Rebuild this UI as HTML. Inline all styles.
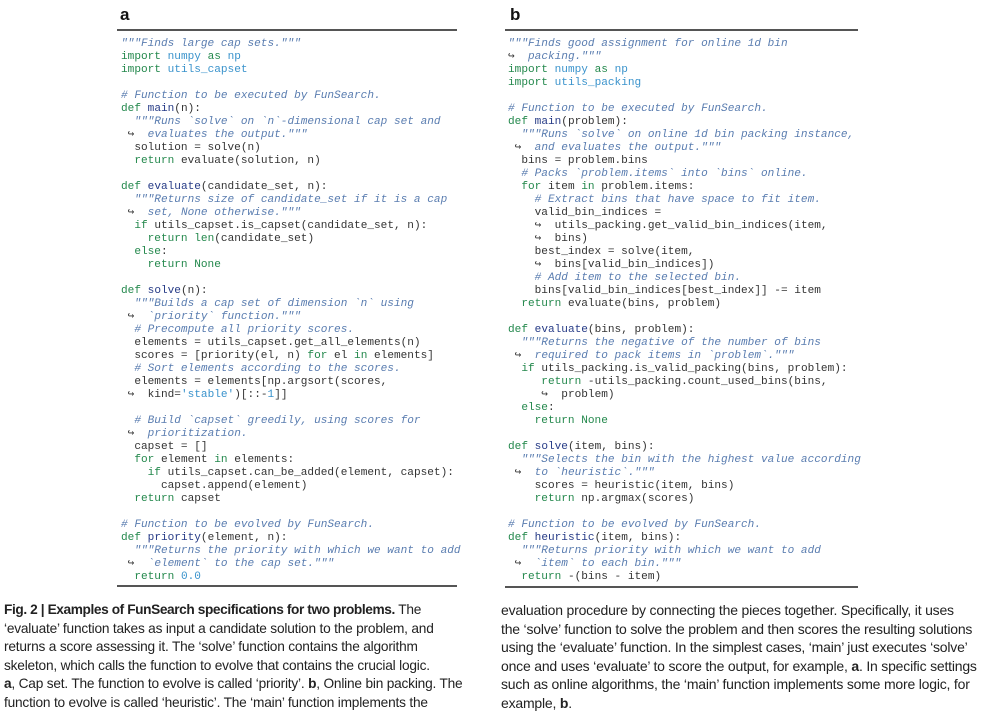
<!DOCTYPE html>
<html><head><meta charset="utf-8"><style>
body{margin:0;width:1004px;height:720px;background:#fff;position:relative;overflow:hidden;font-family:"Liberation Sans",sans-serif;}
.lab{position:absolute;top:5px;font-weight:bold;font-size:17px;color:#111;}
.rule{position:absolute;height:1.5px;background:#555;}
pre{position:absolute;margin:0;top:37.5px;font-family:"Liberation Mono","DejaVu Sans Mono",monospace;font-size:11.1px;line-height:13px;color:#333;}
.c{color:#5a7db0;font-style:italic}
.k{color:#23884c}
.m{color:#3a93cc}
.f{color:#253a86}
.n{color:#3a93cc}
.cap{position:absolute;top:601px;font-size:13.7px;line-height:18.6px;color:#222;letter-spacing:-0.2px;white-space:nowrap;}
</style></head><body>
<div class="lab" style="left:120px">a</div>
<div class="lab" style="left:510px">b</div>
<div class="rule" style="left:117px;width:340px;top:29px"></div>
<div class="rule" style="left:117px;width:340px;top:585px"></div>
<div class="rule" style="left:505px;width:353px;top:29px"></div>
<div class="rule" style="left:505px;width:353px;top:586px"></div>
<pre style="left:121px"><span class="c">"""Finds large cap sets."""</span>
<span class="k">import</span> <span class="m">numpy</span> <span class="k">as</span> <span class="m">np</span>
<span class="k">import</span> <span class="m">utils_capset</span>

<span class="c"># Function to be executed by FunSearch.</span>
<span class="k">def</span> <span class="f">main</span>(n):
  <span class="c">"""Runs `solve` on `n`-dimensional cap set and</span>
 ↪  <span class="c">evaluates the output."""</span>
  solution = solve(n)
  <span class="k">return</span> evaluate(solution, n)

<span class="k">def</span> <span class="f">evaluate</span>(candidate_set, n):
  <span class="c">"""Returns size of candidate_set if it is a cap</span>
 ↪  <span class="c">set, None otherwise."""</span>
  <span class="k">if</span> utils_capset.is_capset(candidate_set, n):
    <span class="k">return</span> <span class="k">len</span>(candidate_set)
  <span class="k">else</span>:
    <span class="k">return None</span>

<span class="k">def</span> <span class="f">solve</span>(n):
  <span class="c">"""Builds a cap set of dimension `n` using</span>
 ↪  <span class="c">`priority` function."""</span>
  <span class="c"># Precompute all priority scores.</span>
  elements = utils_capset.get_all_elements(n)
  scores = [priority(el, n) <span class="k">for</span> el <span class="k">in</span> elements]
  <span class="c"># Sort elements according to the scores.</span>
  elements = elements[np.argsort(scores,
 ↪  kind=<span class="n">'stable'</span>)[::-<span class="n">1</span>]]

  <span class="c"># Build `capset` greedily, using scores for</span>
 ↪  <span class="c">prioritization.</span>
  capset = []
  <span class="k">for</span> element <span class="k">in</span> elements:
    <span class="k">if</span> utils_capset.can_be_added(element, capset):
      capset.append(element)
  <span class="k">return</span> capset

<span class="c"># Function to be evolved by FunSearch.</span>
<span class="k">def</span> <span class="f">priority</span>(element, n):
  <span class="c">"""Returns the priority with which we want to add</span>
 ↪  <span class="c">`element` to the cap set."""</span>
  <span class="k">return</span> <span class="n">0.0</span></pre>
<pre style="left:508px"><span class="c">"""Finds good assignment for online 1d bin</span>
↪  <span class="c">packing."""</span>
<span class="k">import</span> <span class="m">numpy</span> <span class="k">as</span> <span class="m">np</span>
<span class="k">import</span> <span class="m">utils_packing</span>

<span class="c"># Function to be executed by FunSearch.</span>
<span class="k">def</span> <span class="f">main</span>(problem):
  <span class="c">"""Runs `solve` on online 1d bin packing instance,</span>
 ↪  <span class="c">and evaluates the output."""</span>
  bins = problem.bins
  <span class="c"># Packs `problem.items` into `bins` online.</span>
  <span class="k">for</span> item <span class="k">in</span> problem.items:
    <span class="c"># Extract bins that have space to fit item.</span>
    valid_bin_indices =
    ↪  utils_packing.get_valid_bin_indices(item,
    ↪  bins)
    best_index = solve(item,
    ↪  bins[valid_bin_indices])
    <span class="c"># Add item to the selected bin.</span>
    bins[valid_bin_indices[best_index]] -= item
  <span class="k">return</span> evaluate(bins, problem)

<span class="k">def</span> <span class="f">evaluate</span>(bins, problem):
  <span class="c">"""Returns the negative of the number of bins</span>
 ↪  <span class="c">required to pack items in `problem`."""</span>
  <span class="k">if</span> utils_packing.is_valid_packing(bins, problem):
     <span class="k">return</span> -utils_packing.count_used_bins(bins,
     ↪  problem)
  <span class="k">else</span>:
    <span class="k">return None</span>

<span class="k">def</span> <span class="f">solve</span>(item, bins):
  <span class="c">"""Selects the bin with the highest value according</span>
 ↪  <span class="c">to `heuristic`."""</span>
    scores = heuristic(item, bins)
    <span class="k">return</span> np.argmax(scores)

<span class="c"># Function to be evolved by FunSearch.</span>
<span class="k">def</span> <span class="f">heuristic</span>(item, bins):
  <span class="c">"""Returns priority with which we want to add</span>
 ↪  <span class="c">`item` to each bin."""</span>
  <span class="k">return</span> -(bins - item)</pre>
<div class="cap" style="left:4px"><b style="letter-spacing:-0.4px">Fig. 2 | Examples of FunSearch specifications for two problems.</b> The<br>‘evaluate’ function takes as input a candidate solution to the problem, and<br>returns a score assessing it. The ‘solve’ function contains the algorithm<br>skeleton, which calls the function to evolve that contains the crucial logic.<br><b>a</b>, Cap set. The function to evolve is called ‘priority’. <b>b</b>, Online bin packing. The<br>function to evolve is called ‘heuristic’. The ‘main’ function implements the</div>
<div class="cap" style="left:501px;font-size:14px">evaluation procedure by connecting the pieces together. Specifically, it uses<br>the ‘solve’ function to solve the problem and then scores the resulting solutions<br>using the ‘evaluate’ function. In the simplest cases, ‘main’ just executes ‘solve’<br>once and uses ‘evaluate’ to score the output, for example, <b>a</b>. In specific settings<br>such as online algorithms, the ‘main’ function implements some more logic, for<br>example, <b>b</b>.</div>
</body></html>
